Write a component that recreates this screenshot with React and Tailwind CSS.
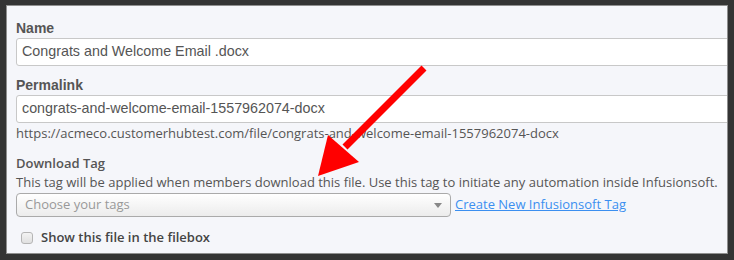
export default function App() {
  return (
    <div className="w-[734px] h-[260px] bg-[#343434] pt-[5px] pl-[6px] relative overflow-hidden">
      <div className="w-[722px] h-[249px] bg-[#f5f6fa] border border-[#8f8f8f] overflow-hidden pl-[9px] pt-[12px]">
        <div className="font-['Liberation_Sans',Arial,sans-serif] text-[14px] font-bold text-[#555] leading-[20px]">Name</div>
        <div className="w-[740px] h-[28px] bg-white border border-[#c8c8c8] rounded-[3px] pl-[5px] flex items-center font-['Liberation_Sans',Arial,sans-serif] text-[14.3px] text-[#555]">Congrats and Welcome Email .docx</div>
        <div className="mt-[9px] font-['Liberation_Sans',Arial,sans-serif] text-[14px] font-bold text-[#555] leading-[20px]">Permalink</div>
        <div className="w-[740px] h-[28px] bg-white border border-[#c8c8c8] rounded-[3px] pl-[5px] flex items-center font-['Liberation_Sans',Arial,sans-serif] text-[14.3px] text-[#555]">congrats-and-welcome-email-1557962074-docx</div>
        <div className="mt-[1px] font-['Open_Sans',sans-serif] text-[13px] text-[#555] leading-[18px]">https://acmeco.customerhubtest.com/file/congrats-and-welcome-email-1557962074-docx</div>
        <div className="mt-[12px] font-['Open_Sans',sans-serif] text-[13px] font-semibold text-[#555] leading-[18px]">Download Tag</div>
        <div className="mt-[1px] font-['Open_Sans',sans-serif] text-[13px] text-[#555] leading-[18px]">This tag will be applied when members download this file. Use this tag to initiate any automation inside Infusionsoft.</div>
        <div className="flex items-center mt-[2px]">
          <div className="w-[435px] h-[24px] rounded-[4px] border border-[#aaa] bg-gradient-to-b from-white to-[#ececec] flex items-center justify-between pl-[8px] pr-[8px]">
            <span className="font-['Open_Sans',sans-serif] text-[13px] text-[#999]">Choose your tags</span>
            <svg width="8" height="5" viewBox="0 0 8 5"><path d="M0 0H8L4 5Z" fill="#888" /></svg>
          </div>
          <a className="ml-[4px] font-['Open_Sans',sans-serif] text-[13px] text-[#3b8ff0] underline">Create New Infusionsoft Tag</a>
        </div>
        <div className="mt-[12px] ml-[5px] h-[18px] flex items-center">
          <div className="w-[12px] h-[12px] rounded-[3px] border border-[#b5b5b5] bg-gradient-to-b from-[#f3f3f3] to-[#e0e0e0]"></div>
          <span className="ml-[8px] font-['Open_Sans',sans-serif] text-[13px] font-semibold text-[#444]">Show this file in the filebox</span>
        </div>
      </div>
      <svg className="absolute left-0 top-0" width="734" height="260" viewBox="0 0 734 260">
        <line x1="424" y1="68" x2="345" y2="147" stroke="#ff0000" strokeWidth="7" />
        <polygon points="318,176 328,135 359,162" fill="#ff0000" />
      </svg>
    </div>
  );
}
